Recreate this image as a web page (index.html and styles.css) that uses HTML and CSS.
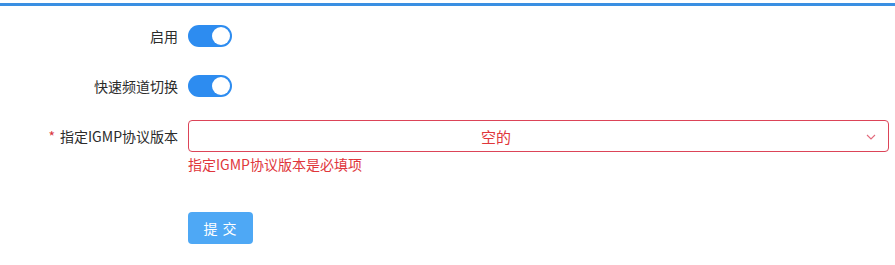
FILE: index.html
```html
<!DOCTYPE html>
<html lang="zh-CN">
<head>
<meta charset="utf-8">
<title>IGMP</title>
<link rel="stylesheet" href="styles.css">
</head>
<body>
<div class="page">
  <form class="form">
    <div class="form-item">
      <label class="label">启用</label>
      <div class="control"><span class="switch"><span class="knob"></span></span></div>
    </div>
    <div class="form-item">
      <label class="label">快速频道切换</label>
      <div class="control"><span class="switch"><span class="knob"></span></span></div>
    </div>
    <div class="form-item form-item-error">
      <label class="label"><span class="req">*</span>指定IGMP协议版本</label>
      <div class="control">
        <div class="select">
          <span class="select-value">空的</span>
          <svg class="arrow" width="10" height="6" viewBox="0 0 10 6"><path d="M1 1 L5 5 L9 1" fill="none" stroke="#e26a7c" stroke-width="1.1"/></svg>
        </div>
        <div class="error-tip">指定IGMP协议版本是必填项</div>
      </div>
    </div>
    <div class="form-item form-actions">
      <span></span>
      <div class="control"><button type="button" class="btn">提 交</button></div>
    </div>
  </form>
</div>
</body>
</html>
```
FILE: styles.css
```css
html, body {
  margin: 0;
  padding: 0;
  background: #fff;
}
body {
  font-family: "Noto Sans CJK SC", "Noto Sans", sans-serif;
  font-size: 14px;
  color: #2b2b2b;
}
.page {
  padding-top: 3px;
}
.form {
  border-top: 3px solid #3a8fe2;
  padding: 14px 6px 0 0;
}
.form-item {
  display: grid;
  grid-template-columns: 178px 1fr;
  column-gap: 10px;
  margin-bottom: 18px;
}
.form-item-error {
  margin-top: 3px;
  margin-bottom: 0;
}
.label {
  text-align: right;
  line-height: 32px;
  height: 32px;
  font-size: 14px;
  color: #2b2b2b;
}
.req {
  color: #d9363e;
  margin-right: 5px;
}
.control {
  display: flex;
  flex-direction: column;
  justify-content: center;
  min-height: 32px;
}
.switch {
  display: block;
  width: 44px;
  height: 22px;
  border-radius: 11px;
  background: #2d8cf0;
  position: relative;
  box-sizing: border-box;
}
.knob {
  position: absolute;
  top: 2px;
  right: 2px;
  width: 18px;
  height: 18px;
  border-radius: 50%;
  background: #fff;
}
.select {
  height: 32px;
  box-sizing: border-box;
  border: 1px solid #dc4458;
  border-radius: 4px;
  display: flex;
  align-items: center;
  padding-left: 292px;
  padding-right: 12px;
}
.select-value {
  flex: 1;
  color: #e0363b;
  font-size: 15px;
}
.arrow {
  display: block;
  margin-top: 1px;
}
.error-tip {
  color: #e0363b;
  font-size: 14px;
  line-height: 20px;
  margin-top: 2px;
}
.form-actions {
  margin-top: 38px;
}
.btn {
  width: 65px;
  height: 32px;
  border: none;
  border-radius: 4px;
  background: #4ea8f5;
  color: #fff;
  font-family: "Noto Sans CJK SC", sans-serif;
  font-size: 14px;
  padding: 0;
  letter-spacing: 1px;
}
```
